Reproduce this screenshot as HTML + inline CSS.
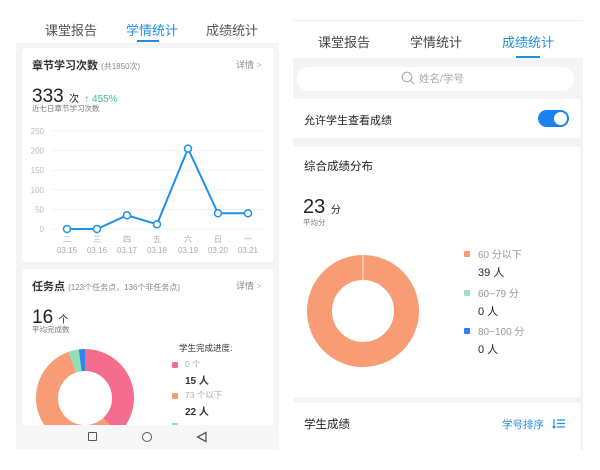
<!DOCTYPE html>
<html><head><meta charset="utf-8"><style>
*{margin:0;padding:0;box-sizing:border-box}
body{width:600px;height:470px;background:#fff;font-family:"Liberation Sans","Noto Sans CJK SC",sans-serif;position:relative;overflow:hidden;color:#222}
.a{position:absolute;white-space:nowrap}
</style></head><body>
<!-- LEFT PANEL -->
<div class="a" style="left:16px;top:13px;width:263px;height:437px;background:#f3f4f6"></div>
<div class="a" style="left:16px;top:13px;width:263px;height:30px;background:#fff"></div>
<div class="a" style="left:45px;top:20px;font-size:13px;color:#555">课堂报告</div>
<div class="a" style="left:126px;top:20px;font-size:13px;color:#1e8fe0">学情统计</div>
<div class="a" style="left:206px;top:20px;font-size:13px;color:#555">成绩统计</div>
<div class="a" style="left:137px;top:40px;width:22px;height:2px;background:#1e8fe0"></div>

<div class="a" style="left:22px;top:48px;width:252px;height:214px;background:#fff;border-radius:4px"></div>
<div class="a" style="left:32px;top:57px;font-size:11px;font-weight:bold;color:#333">章节学习次数 <span style="font-weight:normal;font-size:8px;color:#888">(共1850次)</span></div>
<div class="a" style="left:236px;top:58px;font-size:9px;color:#888">详情 <span style="color:#bbb">&gt;</span></div>
<div class="a" style="left:32px;top:86px;font-size:19px;color:#222">333 <span style="font-size:10px">次</span> <span style="font-size:10px;color:#3cc38c">↑ 455%</span></div>
<div class="a" style="left:32px;top:103px;font-size:7.5px;color:#777">近七日章节学习次数</div>
<svg class="a" style="left:0;top:0" width="300" height="270">
<g stroke="#f2f3f5" stroke-width="1">
<line x1="52" y1="131" x2="264" y2="131"/><line x1="52" y1="150.6" x2="264" y2="150.6"/><line x1="52" y1="170.2" x2="264" y2="170.2"/><line x1="52" y1="189.8" x2="264" y2="189.8"/><line x1="52" y1="209.4" x2="264" y2="209.4"/><line x1="52" y1="229" x2="264" y2="229"/></g>
<g font-size="8" fill="#bbb" font-family="Liberation Sans" text-anchor="end">
<text x="44" y="134">250</text><text x="44" y="153.6">200</text><text x="44" y="173">150</text><text x="44" y="192.8">100</text><text x="44" y="212.4">50</text><text x="44" y="232">0</text></g>
<polyline fill="none" stroke="#1e90e8" stroke-width="2" points="67,229 97,229 127,215.3 157,224.3 188,148.6 218,213.3 248,213.3"/>
<g fill="#fff" stroke="#1e90e8" stroke-width="1.5">
<circle cx="67" cy="229" r="3.5"/><circle cx="97" cy="229" r="3.5"/><circle cx="127" cy="215.3" r="3.5"/><circle cx="157" cy="224.3" r="3.5"/><circle cx="188" cy="148.6" r="3.5"/><circle cx="218" cy="213.3" r="3.5"/><circle cx="248" cy="213.3" r="3.5"/></g>
<g font-size="8" fill="#aaa" font-family="Liberation Sans,Noto Sans CJK SC" text-anchor="middle">
<text x="67" y="242">二</text><text x="97" y="242">三</text><text x="127" y="242">四</text><text x="157" y="242">五</text><text x="188" y="242">六</text><text x="218" y="242">日</text><text x="248" y="242">一</text>
<text x="67" y="253">03.15</text><text x="97" y="253">03.16</text><text x="127" y="253">03.17</text><text x="157" y="253">03.18</text><text x="188" y="253">03.19</text><text x="218" y="253">03.20</text><text x="248" y="253">03.21</text></g>
</svg>

<div class="a" style="left:22px;top:269px;width:252px;height:160px;background:#fff;border-radius:4px"></div>
<div class="a" style="left:32px;top:278px;font-size:11px;font-weight:bold;color:#333">任务点 <span style="font-weight:normal;font-size:8px;color:#888">(123个任务点，136个非任务点)</span></div>
<div class="a" style="left:236px;top:279px;font-size:9px;color:#888">详情 <span style="color:#bbb">&gt;</span></div>
<div class="a" style="left:32px;top:307px;font-size:19px;color:#222">16 <span style="font-size:10px">个</span></div>
<div class="a" style="left:32px;top:324px;font-size:7.5px;color:#777">平均完成数</div>
<div class="a" style="left:179px;top:342px;font-size:8.5px;color:#333">学生完成进度:</div>
<div class="a" style="left:172px;top:362px;width:6px;height:6px;background:#f56d8e;border-radius:1px"></div>
<div class="a" style="left:185px;top:358px;font-size:8.5px;color:#aaa">0 个</div>
<div class="a" style="left:185px;top:372px;font-size:10px;font-weight:bold;color:#333">15 人</div>
<div class="a" style="left:172px;top:393px;width:6px;height:6px;background:#f89c76;border-radius:1px"></div>
<div class="a" style="left:185px;top:389px;font-size:8.5px;color:#aaa">73 个以下</div>
<div class="a" style="left:185px;top:403px;font-size:10px;font-weight:bold;color:#333">22 人</div>
<div class="a" style="left:172px;top:423px;width:6px;height:3px;background:#8fe0b5"></div>
<svg class="a" style="left:0;top:0" width="300" height="450">
<g transform="rotate(-90 85 398)" fill="none" stroke-width="22">
<circle cx="85" cy="398" r="38" stroke="#f56d8e" stroke-dasharray="90.9 300"/>
<circle cx="85" cy="398" r="38" stroke="#f89c76" stroke-dasharray="0 90.9 134.6 300"/>
<circle cx="85" cy="398" r="38" stroke="#8fe0b5" stroke-dasharray="0 225.5 8 300"/>
<circle cx="85" cy="398" r="38" stroke="#2f86f0" stroke-dasharray="0 233.5 5.3 300"/>
</g></svg>
<div class="a" style="left:16px;top:425px;width:263px;height:25px;background:#f7f7f7"></div>
<div class="a" style="left:88px;top:432px;width:9px;height:9px;border:1.3px solid #555;border-radius:1px"></div>
<div class="a" style="left:142px;top:432px;width:10px;height:10px;border:1.3px solid #555;border-radius:50%"></div>
<svg class="a" style="left:196px;top:431px" width="12" height="12"><path d="M10 1.5 L1.5 6 L10 10.5 Z" fill="none" stroke="#555" stroke-width="1.3"/></svg>

<!-- RIGHT PANEL -->
<div class="a" style="left:293px;top:20px;width:290px;height:430px;background:#f3f4f6"></div>
<div class="a" style="left:293px;top:20px;width:290px;height:38px;background:#fff;border-top:1px solid #f0f0f0"></div>
<div class="a" style="left:318px;top:32px;font-size:13px;color:#444">课堂报告</div>
<div class="a" style="left:410px;top:32px;font-size:13px;color:#444">学情统计</div>
<div class="a" style="left:502px;top:32px;font-size:13px;color:#1e8fe0">成绩统计</div>
<div class="a" style="left:516px;top:56px;width:24px;height:2px;background:#1e8fe0"></div>
<div class="a" style="left:297px;top:67px;width:277px;height:24px;background:#fff;border-radius:12px"></div>
<svg class="a" style="left:401px;top:71px" width="14" height="14"><circle cx="6" cy="6" r="4.8" fill="none" stroke="#aaa" stroke-width="1.1"/><line x1="9.5" y1="9.5" x2="13" y2="13" stroke="#aaa" stroke-width="1.1"/></svg>
<div class="a" style="left:419px;top:71px;font-size:10.5px;color:#aaa">姓名/学号</div>
<div class="a" style="left:293px;top:99px;width:287px;height:39px;background:#fff"></div>
<div class="a" style="left:304px;top:112px;font-size:11px;color:#222">允许学生查看成绩</div>
<div class="a" style="left:538px;top:110px;width:31px;height:17px;background:#1a82f0;border-radius:9px"></div>
<div class="a" style="left:554px;top:112px;width:13px;height:13px;background:#fff;border-radius:50%"></div>
<div class="a" style="left:293px;top:147px;width:287px;height:250px;background:#fff"></div>
<div class="a" style="left:304px;top:158px;font-size:11.5px;color:#222">综合成绩分布</div>
<div class="a" style="left:303px;top:196px;font-size:20px;color:#222">23 <span style="font-size:10px">分</span></div>
<div class="a" style="left:303px;top:217px;font-size:7.5px;color:#777">平均分</div>
<svg class="a" style="left:0;top:0" width="600" height="400">
<circle cx="363" cy="311" r="43.5" fill="none" stroke="#f89c76" stroke-width="25"/>
<line x1="363" y1="254" x2="363" y2="280" stroke="#fff" stroke-width="0.8"/></svg>
<div class="a" style="left:464px;top:251px;width:6px;height:6px;background:#f89c76;border-radius:1px"></div>
<div class="a" style="left:478px;top:246px;font-size:10px;color:#999">60 分以下</div>
<div class="a" style="left:478px;top:264px;font-size:11px;color:#222">39 人</div>
<div class="a" style="left:464px;top:290px;width:6px;height:6px;background:#9ee2b8;border-radius:1px"></div>
<div class="a" style="left:478px;top:285px;font-size:10px;color:#999">60~79 分</div>
<div class="a" style="left:478px;top:303px;font-size:11px;color:#222">0 人</div>
<div class="a" style="left:464px;top:328px;width:6px;height:6px;background:#2f7ff0;border-radius:1px"></div>
<div class="a" style="left:478px;top:323px;font-size:10px;color:#999">80~100 分</div>
<div class="a" style="left:478px;top:341px;font-size:11px;color:#222">0 人</div>
<div class="a" style="left:293px;top:403px;width:287px;height:47px;background:#fff"></div>
<div class="a" style="left:304px;top:416px;font-size:11.5px;color:#222">学生成绩</div>
<div class="a" style="left:502px;top:417px;font-size:10.5px;color:#1e8fe0">学号排序</div>
<svg class="a" style="left:552px;top:418px" width="14" height="12"><path d="M2 1v9M0.5 8.5L2 10l1.5-1.5M5 2h8M5 5.5h8M5 9h8" fill="none" stroke="#1e8fe0" stroke-width="1.2"/></svg>
<div class="a" style="left:293px;top:450px;width:307px;height:20px;background:#fff"></div>
</body></html>
